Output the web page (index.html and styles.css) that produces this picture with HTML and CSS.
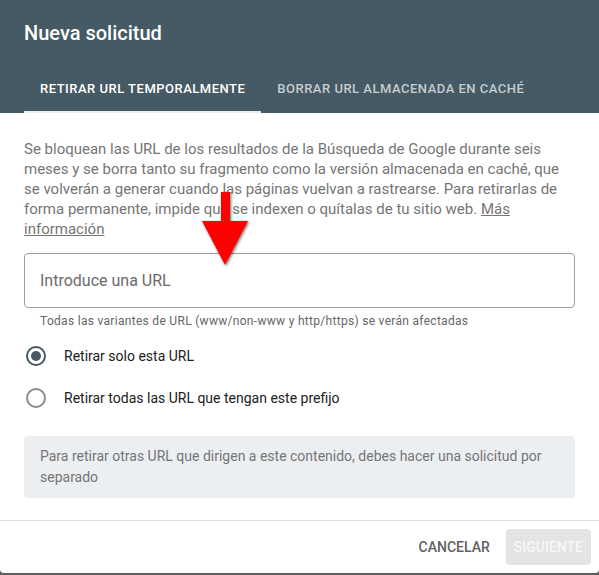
FILE: index.html
```html
<!DOCTYPE html>
<html lang="es">
<head>
  <meta charset="UTF-8" />
  <meta name="viewport" content="width=device-width, initial-scale=1.0" />
  <title>Nueva solicitud</title>
  <link rel="stylesheet" href="styles.css">
</head>
<body>
  <div class="dialog">
    <!-- cabecera con pestañas -->
    <div class="dialog-head">
      <h2 class="dialog-title">Nueva solicitud</h2>
      <div class="tabs">
        <div class="tab active">Retirar URL temporalmente</div>
        <div class="tab">Borrar URL almacenada en caché</div>
      </div>
    </div>

    <div class="dialog-body">
      <p class="intro">
        Se bloquean las URL de los resultados de la Búsqueda de Google durante seis
        meses y se borra tanto su fragmento como la versión almacenada en caché, que
        se volverán a generar cuando las páginas vuelvan a rastrearse. Para retirarlas de
        forma permanente, impide que se indexen o quítalas de tu sitio web.
        <a href="#" class="more">Más información</a>
      </p>

      <div class="url-field">
        <input type="text" placeholder="Introduce una URL">
      </div>
      <div class="helper">Todas las variantes de URL (www/non-www y http/https) se verán afectadas</div>

      <div class="options">
        <label class="option">
          <span class="radio checked"></span>
          Retirar solo esta URL
        </label>
        <label class="option">
          <span class="radio"></span>
          Retirar todas las URL que tengan este prefijo
        </label>
      </div>

      <div class="note">
        Para retirar otras URL que dirigen a este contenido, debes hacer una solicitud por
        separado
      </div>
    </div>

    <div class="dialog-foot">
      <button class="btn">Cancelar</button>
      <button class="btn btn-disabled">Siguiente</button>
    </div>

    <!-- flecha roja encima -->
    <svg class="arrow" width="60" height="90" viewBox="0 0 60 90">
      <defs>
        <filter id="sh" x="-30%" y="-30%" width="160%" height="160%">
          <feDropShadow dx="1" dy="1" stdDeviation="1.5" flood-color="#000" flood-opacity="0.6"/>
        </filter>
      </defs>
      <g filter="url(#sh)">
        <rect x="21" y="2" width="9" height="32" fill="#ff0000"/>
        <polygon points="2,31 48,31 25,75" fill="#ff0000"/>
      </g>
    </svg>
  </div>
</body>
</html>
```

FILE: styles.css
```css
body {
  margin: 0;
  background: #5f5f5f;
  font-family: Roboto, "Noto Sans", Arial, sans-serif;
}

.dialog {
  position: relative;
  height: 573px;
  background: #fff;
  border-radius: 0 0 4px 4px;
  display: flex;
  flex-direction: column;
  overflow: hidden;
}

.dialog-head {
  background: #455a64;
  padding: 20px 24px 0;
}

.dialog-title {
  margin: 0 0 19px;
  color: #fff;
  font-size: 20px;
  font-weight: 500;
  line-height: 26px;
}

.tabs {
  display: flex;
}

.tab {
  height: 48px;
  padding: 0 16px;
  display: flex;
  align-items: center;
  box-sizing: border-box;
  font-size: 13px;
  font-weight: 500;
  letter-spacing: 0.5px;
  text-transform: uppercase;
  color: rgba(255, 255, 255, 0.7);
  border-bottom: 2px solid transparent;
}

.tab.active {
  color: #fff;
  border-bottom-color: #eceff1;
}

.dialog-body {
  flex: 1;
  padding: 26px 24px 0;
}

.intro {
  margin: 0;
  font-size: 15px;
  line-height: 20px;
  color: #757575;
}

.more {
  color: #757575;
}

.url-field {
  margin-top: 14px;
}

.url-field input {
  width: 100%;
  height: 55px;
  box-sizing: border-box;
  border: 1px solid #9e9e9e;
  border-radius: 4px;
  padding: 0 15px;
  font-family: inherit;
  font-size: 16px;
  color: #212121;
  outline: none;
}

.url-field input::placeholder {
  color: #6b6b6b;
}

.helper {
  padding: 5px 16px 0;
  font-size: 12px;
  letter-spacing: 0.3px;
  line-height: 16px;
  color: #666;
}

.options {
  margin-top: 6px;
}

.option {
  display: flex;
  align-items: center;
  gap: 18px;
  height: 42px;
  padding-left: 2px;
  font-size: 14px;
  color: #212121;
}

.radio {
  width: 20px;
  height: 20px;
  box-sizing: border-box;
  border: 2px solid #8a8a8a;
  border-radius: 50%;
  display: flex;
  align-items: center;
  justify-content: center;
}

.radio.checked {
  border-color: #455a64;
}

.radio.checked::after {
  content: "";
  width: 10px;
  height: 10px;
  border-radius: 50%;
  background: #455a64;
}

.note {
  margin-top: 17px;
  padding: 10px 16px;
  background: #eceff1;
  border-radius: 4px;
  font-size: 14px;
  line-height: 21px;
  color: #757575;
}

.dialog-foot {
  border-top: 1px solid #e0e0e0;
  padding: 8px;
  display: flex;
  justify-content: flex-end;
  gap: 8px;
}

.btn {
  height: 36px;
  padding: 0 8px;
  border: 0;
  border-radius: 4px;
  background: transparent;
  font-family: inherit;
  font-size: 14px;
  font-weight: 500;
  text-transform: uppercase;
  color: #616161;
}

.btn-disabled {
  background: #e4e4e4;
  color: #f7f7f7;
}

.arrow {
  position: absolute;
  left: 200px;
  top: 190px;
}
```
